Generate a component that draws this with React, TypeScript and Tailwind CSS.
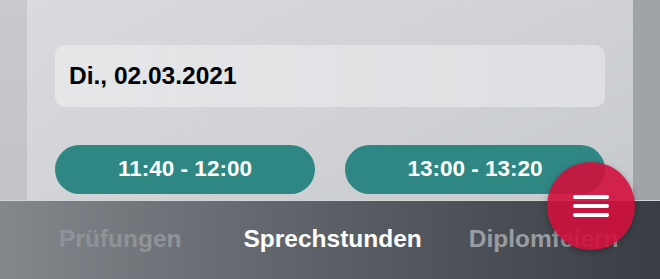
import React from "react";

export default function App() {
  const font = { fontFamily: "'Liberation Sans', Arial, sans-serif" };
  return (
    <div
      className="relative w-[660px] h-[279px] overflow-hidden flex bg-[#c4c6c9]"
      style={font}
    >
      <div className="w-[27px] shrink-0 bg-gradient-to-b from-[#c8cacd] to-[#bfc1c4]" />
      <div className="w-[606px] shrink-0 flex flex-col bg-gradient-to-br from-[#d9dbde] via-[#cfd1d4] to-[#c4c7ca] px-[28px]">
        <div className="h-[45px]" />
        <div className="h-[62px] rounded-[10px] bg-gradient-to-r from-[#e4e6e8] to-[#dddfe2] flex items-center pl-[14px]">
          <span className="text-[24.5px] font-bold text-black leading-none">
            Di., 02.03.2021
          </span>
        </div>
        <div className="mt-[38px] flex gap-[30px]">
          <div className="w-[260px] h-[49px] rounded-full bg-[#2f8784] flex items-center justify-center">
            <span className="text-white font-bold text-[22.5px] leading-none">11:40 - 12:00</span>
          </div>
          <div className="w-[260px] h-[49px] rounded-full bg-[#2f8784] flex items-center justify-center">
            <span className="text-white font-bold text-[22.5px] leading-none">13:00 - 13:20</span>
          </div>
        </div>
      </div>
      <div className="flex-1 bg-[#a0a3a8]" />

      <div className="absolute left-0 right-0 top-[200px] bottom-0 border-t border-[#d4d6d9] bg-gradient-to-r from-[#84878c] via-[#5b6066] to-[#393e44] flex items-center">
        <div className="flex w-full items-center pb-[2px]">
          <span className="ml-[59px] text-[24.5px] font-bold text-[#8f9297] leading-none">Prüfungen</span>
          <span className="ml-[62px] text-[24.5px] font-bold text-white leading-none">Sprechstunden</span>
          <span className="ml-[47px] text-[24.5px] font-bold text-[#999ca1] leading-none">Diplomfeiern</span>
        </div>
      </div>

      <div className="absolute left-[547px] top-[162px] w-[88px] h-[88px] rounded-full bg-[#d0103c]/90 shadow-[0_2px_6px_rgba(0,0,0,0.3)] flex flex-col items-center justify-center gap-[5.5px]">
        <div className="w-[36px] h-[3.5px] rounded-full bg-white" />
        <div className="w-[36px] h-[3.5px] rounded-full bg-white" />
        <div className="w-[36px] h-[3.5px] rounded-full bg-white" />
      </div>
    </div>
  );
}
